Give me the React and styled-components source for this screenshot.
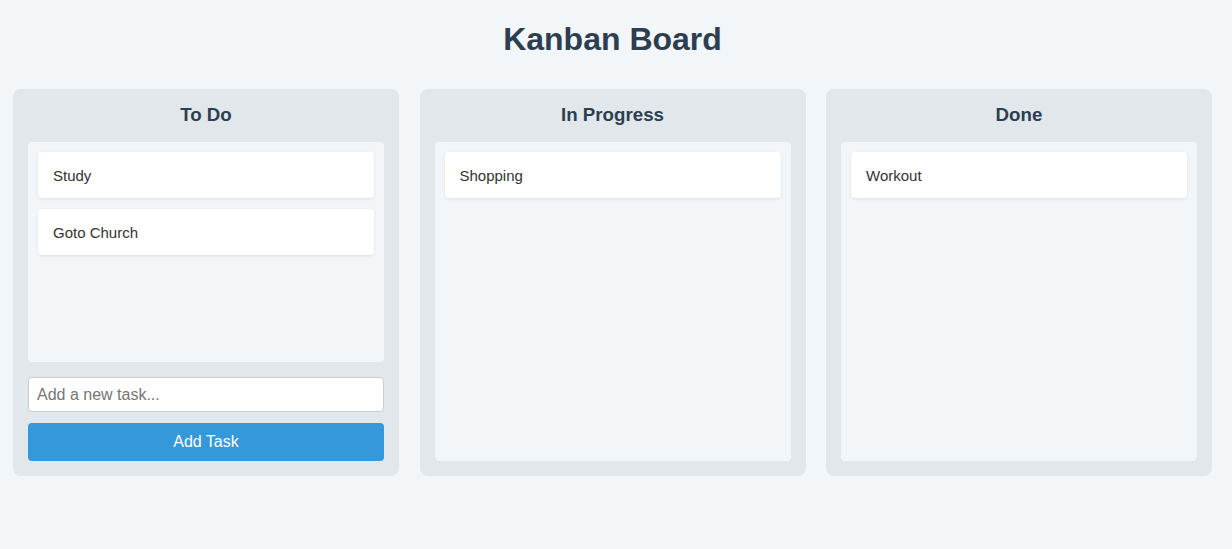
import React, { useState } from "react";
import styled, { createGlobalStyle } from "styled-components";

const GlobalStyle = createGlobalStyle`
  body {
    margin: 0;
    background: #f3f6f9;
    font-family: "Liberation Sans", Arial, sans-serif;
    color: #333;
  }
  * {
    box-sizing: border-box;
  }
`;

const Page = styled.div`
  padding: 21px 20px 40px 13px;
`;

const Title = styled.h1`
  margin: 0 0 31px;
  text-align: center;
  font-size: 32px;
  line-height: 37px;
  font-weight: bold;
  color: #2c3e50;
`;

const Board = styled.div`
  display: flex;
  gap: 20.5px;
  align-items: stretch;
`;

const Column = styled.div`
  flex: 0 0 386px;
  min-height: 387px;
  display: flex;
  flex-direction: column;
  padding: 15px;
  background: #e2e7eb;
  border-radius: 8px;
`;

const ColumnTitle = styled.h3`
  margin: 0 0 16px;
  text-align: center;
  font-size: 18.72px;
  line-height: 22px;
  font-weight: bold;
  color: #2c3e50;
`;

const TaskList = styled.div`
  flex: 1;
  display: flex;
  flex-direction: column;
  gap: 11px;
  padding: 10px;
  background: #f3f6f9;
  border-radius: 4px;
`;

const Card = styled.div`
  height: 46px;
  display: flex;
  align-items: center;
  padding: 0 15px;
  background: #fff;
  border-radius: 4px;
  box-shadow: 0 1px 3px rgba(0, 0, 0, 0.1);
  font-size: 15px;
  color: #333;
`;

const Input = styled.input`
  margin-top: 15px;
  width: 100%;
  height: 35px;
  padding: 0 8px;
  border: 1px solid #ccc;
  border-radius: 4px;
  font-family: inherit;
  font-size: 16px;
  color: #333;
  background: #fff;
  &::placeholder {
    color: #757575;
  }
`;

const AddButton = styled.button`
  margin-top: 11px;
  width: 100%;
  height: 38px;
  border: none;
  border-radius: 4px;
  background: #3498db;
  color: #fff;
  font-family: inherit;
  font-size: 16px;
  cursor: pointer;
`;

const initialColumns = [
  { id: "todo", title: "To Do", tasks: ["Study", "Goto Church"] },
  { id: "progress", title: "In Progress", tasks: ["Shopping"] },
  { id: "done", title: "Done", tasks: ["Workout"] },
];

const App = () => {
  const [columns, setColumns] = useState(initialColumns);
  const [newTask, setNewTask] = useState("");

  const handleAdd = () => {
    if (!newTask.trim()) return;
    setColumns((prev) =>
      prev.map((col) =>
        col.id === "todo" ? { ...col, tasks: [...col.tasks, newTask] } : col
      )
    );
    setNewTask("");
  };

  return (
    <Page>
      <GlobalStyle />
      <Title>Kanban Board</Title>
      <Board>
        {columns.map((col) => (
          <Column key={col.id}>
            <ColumnTitle>{col.title}</ColumnTitle>
            <TaskList>
              {col.tasks.map((task, i) => (
                <Card key={i}>{task}</Card>
              ))}
            </TaskList>
            {col.id === "todo" && (
              <>
                <Input
                  placeholder="Add a new task..."
                  value={newTask}
                  onChange={(e) => setNewTask(e.target.value)}
                />
                <AddButton onClick={handleAdd}>Add Task</AddButton>
              </>
            )}
          </Column>
        ))}
      </Board>
    </Page>
  );
};

export default App;
